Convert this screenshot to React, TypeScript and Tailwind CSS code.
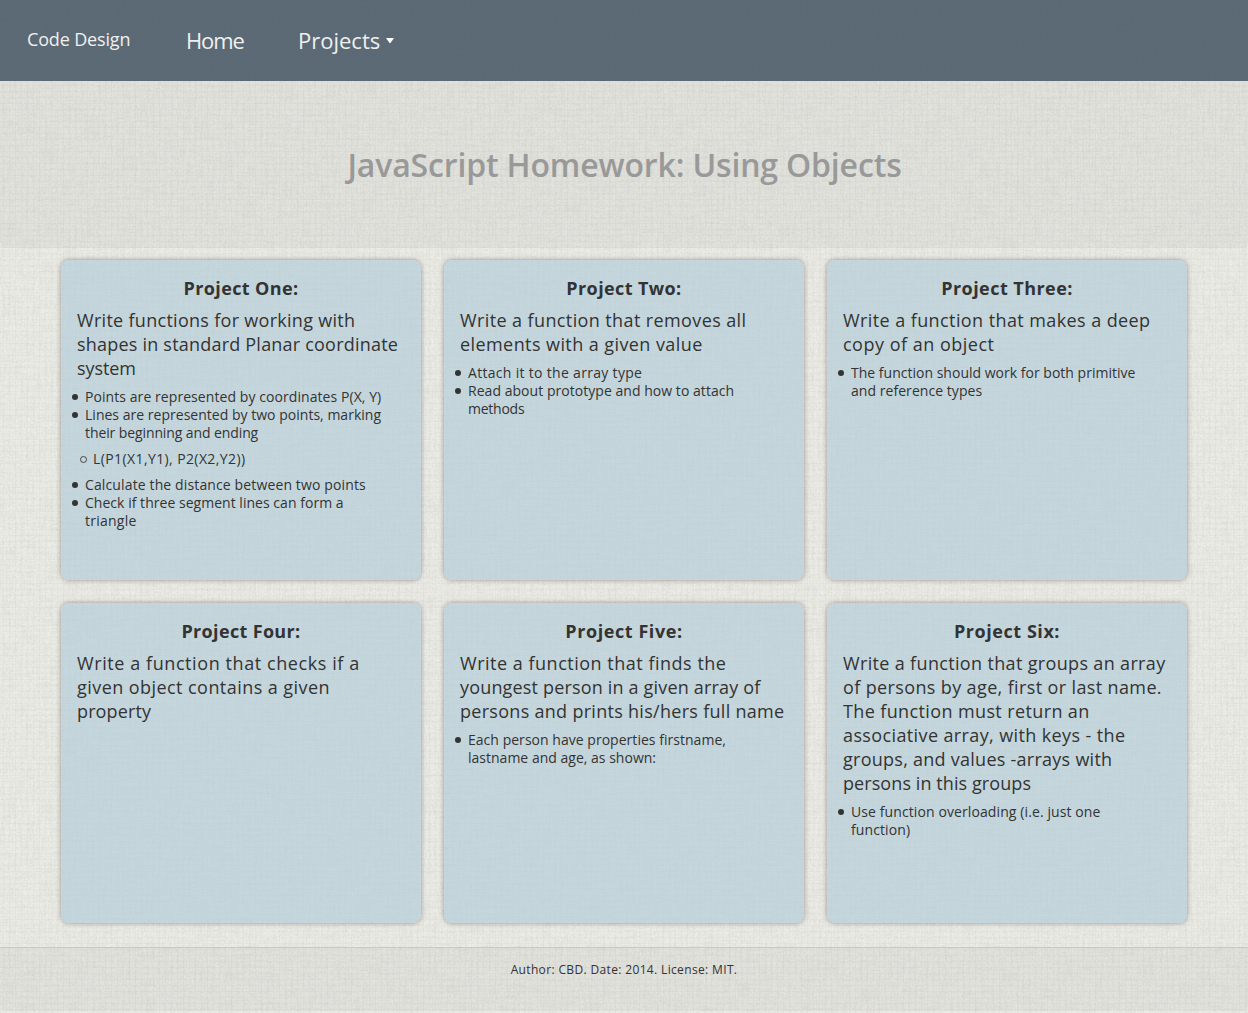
import React from "react";

type Line = [text: string, tracking: string];
type Item = { lines: Line[]; nested?: Line[] };
type Project = { title: Line; text: Line[]; items?: Item[] };

const projects: Project[] = [
  {
    title: ["Project One:", "tracking-[0.38px]"],
    text: [
      ["Write functions for working with", "tracking-[0.29px]"],
      ["shapes in standard Planar coordinate", "tracking-[0.21px]"],
      ["system", "tracking-[-0.07px]"],
    ],
    items: [
      { lines: [["Points are represented by coordinates P(X, Y)", "tracking-[0.07px]"]] },
      {
        lines: [
          ["Lines are represented by two points, marking", "tracking-[0.02px]"],
          ["their beginning and ending", "tracking-[-0.1px]"],
        ],
        nested: [["L(P1(X1,Y1), P2(X2,Y2))", "tracking-[0.4px]"]],
      },
      { lines: [["Calculate the distance between two points", "tracking-[0.13px]"]] },
      {
        lines: [
          ["Check if three segment lines can form a", "tracking-[0.03px]"],
          ["triangle", "tracking-[0.25px]"],
        ],
      },
    ],
  },
  {
    title: ["Project Two:", "tracking-[0.39px]"],
    text: [
      ["Write a function that removes all", "tracking-[0.39px]"],
      ["elements with a given value", "tracking-[0.42px]"],
    ],
    items: [
      { lines: [["Attach it to the array type", "tracking-[0.31px]"]] },
      {
        lines: [
          ["Read about prototype and how to attach", "tracking-[0.04px]"],
          ["methods", "tracking-[-0.25px]"],
        ],
      },
    ],
  },
  {
    title: ["Project Three:", "tracking-[0.45px]"],
    text: [
      ["Write a function that makes a deep", "tracking-[0.41px]"],
      ["copy of an object", "tracking-[0.5px]"],
    ],
    items: [
      {
        lines: [
          ["The function should work for both primitive", "tracking-[0.01px]"],
          ["and reference types", "tracking-[0.05px]"],
        ],
      },
    ],
  },
  {
    title: ["Project Four:", "tracking-[0.34px]"],
    text: [
      ["Write a function that checks if a", "tracking-[0.58px]"],
      ["given object contains a given", "tracking-[0.44px]"],
      ["property", "tracking-[0.12px]"],
    ],
  },
  {
    title: ["Project Five:", "tracking-[0.58px]"],
    text: [
      ["Write a function that finds the", "tracking-[0.51px]"],
      ["youngest person in a given array of", "tracking-[0.17px]"],
      ["persons and prints his/hers full name", "tracking-[0.29px]"],
    ],
    items: [
      {
        lines: [
          ["Each person have properties firstname,", "tracking-[0.03px]"],
          ["lastname and age, as shown:", "tracking-[0.01px]"],
        ],
      },
    ],
  },
  {
    title: ["Project Six:", "tracking-[0.56px]"],
    text: [
      ["Write a function that groups an array", "tracking-[0.34px]"],
      ["of persons by age, first or last name.", "tracking-[0.37px]"],
      ["The function must return an", "tracking-[0.38px]"],
      ["associative array, with keys - the", "tracking-[0.38px]"],
      ["groups, and values -arrays with", "tracking-[0.26px]"],
      ["persons in this groups", "tracking-[0.08px]"],
    ],
    items: [
      {
        lines: [
          ["Use function overloading (i.e. just one", "tracking-[0.1px]"],
          ["function)", "tracking-[0.1px]"],
        ],
      },
    ],
  },
];

function Lines({ lines }: { lines: Line[] }) {
  return (
    <>
      {lines.map(([text, tracking]) => (
        <span key={text} className={`block whitespace-nowrap ${tracking}`}>
          {text}{" "}
        </span>
      ))}
    </>
  );
}

/* Woven paper texture behind the whole page. */
function Linen() {
  return (
    <svg className="pointer-events-none absolute inset-0 -z-10 h-full w-full" aria-hidden="true">
      <defs>
        <filter id="grain" x="0" y="0" width="100%" height="100%" colorInterpolationFilters="sRGB">
          <feTurbulence type="fractalNoise" baseFrequency="0.5" numOctaves="2" seed="4" />
          <feColorMatrix values="0 0 0 0 0.42  0 0 0 0 0.42  0 0 0 0 0.36  0.16 0 0 0 -0.05" />
        </filter>
        <filter id="weft" x="0" y="0" width="100%" height="100%" colorInterpolationFilters="sRGB">
          <feTurbulence type="fractalNoise" baseFrequency="0.05 0.35" numOctaves="1" seed="9" />
          <feColorMatrix values="0 0 0 0 0.45  0 0 0 0 0.45  0 0 0 0 0.4  0.1 0 0 0 -0.04" />
        </filter>
        <filter id="warp" x="0" y="0" width="100%" height="100%" colorInterpolationFilters="sRGB">
          <feTurbulence type="fractalNoise" baseFrequency="0.35 0.05" numOctaves="1" seed="2" />
          <feColorMatrix values="0 0 0 0 0.45  0 0 0 0 0.45  0 0 0 0 0.4  0.1 0 0 0 -0.04" />
        </filter>
        <pattern id="threads" width="6" height="6" patternUnits="userSpaceOnUse">
          <path d="M0 1.5H6M3.5 0V6" stroke="#55554a" strokeOpacity="0.03" />
        </pattern>
      </defs>
      <rect width="100%" height="100%" fill="#eeeee9" />
      <rect width="100%" height="100%" filter="url(#grain)" />
      <rect width="100%" height="100%" filter="url(#weft)" />
      <rect width="100%" height="100%" filter="url(#warp)" />
      <rect width="100%" height="100%" fill="url(#threads)" />
    </svg>
  );
}

function Card({ project }: { project: Project }) {
  return (
    <section className="h-80 rounded-lg bg-[#b0cdd9]/65 px-4 pt-4 shadow-[0_0_5px_rgba(100,90,85,0.6)]">
      <h2 className="mb-2 text-center font-bold">
        <Lines lines={[project.title]} />
      </h2>
      <p>
        <Lines lines={project.text} />
      </p>
      {project.items && (
        <ul className="mt-2 pl-2 text-[14px] leading-[18px]">
          {project.items.map((item) => (
            <li
              key={item.lines[0][0]}
              className="relative before:absolute before:top-[6px] before:-left-[13px] before:size-[6px] before:rounded-full before:bg-[#333]"
            >
              <Lines lines={item.lines} />
              {item.nested && (
                <ul className="my-2 pl-2">
                  <li className="relative before:absolute before:top-[6px] before:-left-[13px] before:size-[7px] before:rounded-full before:border before:border-[#444]">
                    <Lines lines={item.nested} />
                  </li>
                </ul>
              )}
            </li>
          ))}
        </ul>
      )}
    </section>
  );
}

export default function App() {
  return (
    <div className="relative isolate flex h-[1013px] flex-col overflow-hidden font-['Open_Sans',sans-serif] text-[18px] leading-6 text-[#333]">
      <Linen />
      <nav className="flex h-[81px] shrink-0 items-start bg-[#4a5a69]/89 pt-[27px] pl-[27px] text-[#f0f0ee]">
        <a className="w-[159px] tracking-[-0.16px]">Code Design</a>
        <a className="-mt-px w-[112px] text-[22px] leading-7 tracking-[-1.1px]">Home</a>
        <a className="-mt-px flex items-start text-[22px] leading-7 tracking-[0px]">
          Projects
          <svg className="mt-[12px] ml-[6px]" width="8" height="5" viewBox="0 0 8 5">
            <path d="M0 0H8L4.5 5H3.5Z" fill="#fff" />
          </svg>
        </a>
      </nav>
      <header className="h-[167px] shrink-0 rounded-b-md bg-black/[0.035] pt-[64px] text-center">
        <h1 className="pl-px text-[32px] leading-10 font-semibold tracking-[-0.16px] text-[#999]">
          JavaScript Homework: Using Objects
        </h1>
      </header>
      <main className="grid h-[699px] shrink-0 grid-cols-[repeat(3,360px)] content-start gap-[23px] pt-3 pl-[61px]">
        {projects.map((project) => (
          <Card key={project.title[0]} project={project} />
        ))}
      </main>
      <footer className="h-16 shrink-0 rounded-b-md border-t border-[#c6c7c6] bg-black/[0.035] pt-[14px] text-center text-[12px] leading-4 tracking-[0.35px]">
        Author: CBD. Date: 2014. License: MIT.
      </footer>
    </div>
  );
}
